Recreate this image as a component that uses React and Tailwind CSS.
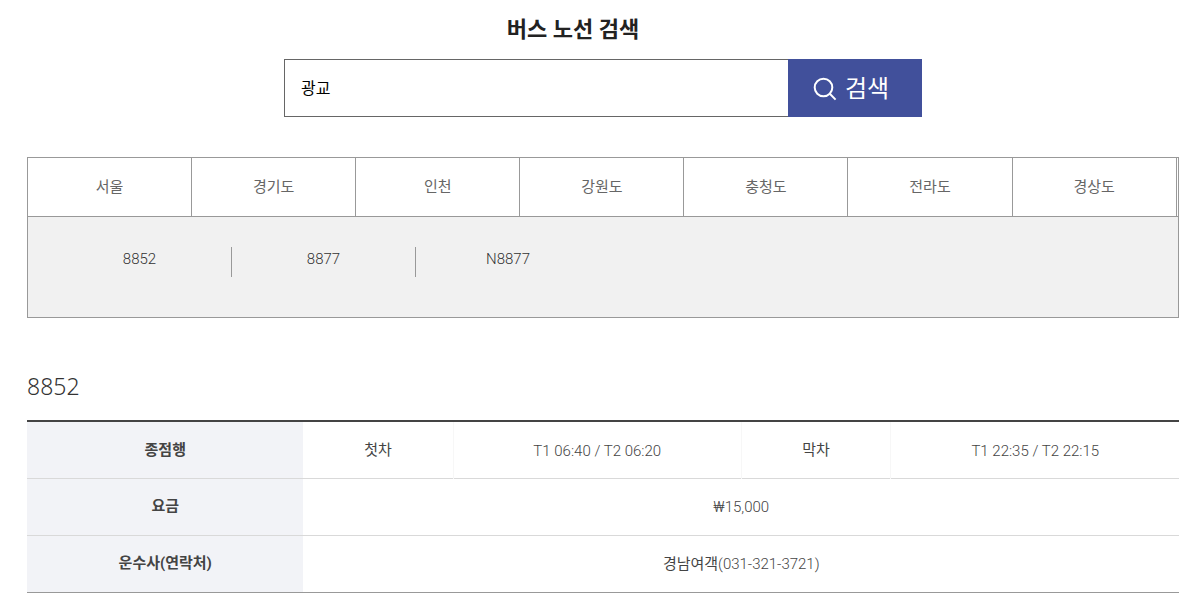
import React, { useState } from "react";

const regions = ["서울", "경기도", "인천", "강원도", "충청도", "전라도", "경상도"];

const routes = ["8852", "8877", "N8877"];

const SearchIcon = () => (
  <svg
    width="24"
    height="24"
    viewBox="0 0 24 24"
    fill="none"
    stroke="currentColor"
    strokeWidth="2"
    aria-hidden="true"
  >
    <circle cx="10.5" cy="10.5" r="8.8" />
    <path d="M16.8 16.8 L22.6 22.6" />
  </svg>
);

const SearchForm = () => {
  const [keyword, setKeyword] = useState("광교");

  return (
    <form
      onSubmit={(e) => e.preventDefault()}
      className="mx-auto mt-3 flex h-[58px] w-full max-w-[638px]"
    >
      <input
        type="text"
        aria-label="버스 노선 검색"
        value={keyword}
        onChange={(e) => setKeyword(e.target.value)}
        className="min-w-0 flex-1 border border-r-0 border-[#666] bg-white px-4 pt-0.5 text-base font-normal text-black outline-none"
      />
      <button
        type="submit"
        className="flex w-[134px] shrink-0 items-center justify-center gap-2 bg-[#41509b] pt-0.5 pr-2 text-2xl font-normal text-white"
      >
        <SearchIcon />
        검색
      </button>
    </form>
  );
};

const RouteList = ({ active, onSelect }) => (
  <section className="mt-10 border border-[#999]">
    <div className="flex border-b border-[#999]">
      {regions.map((name) => (
        <button
          key={name}
          type="button"
          className="h-[58px] w-[14.27%] border-r border-[#999] text-[15px] font-normal text-[#666]"
        >
          {name}
        </button>
      ))}
    </div>
    <ul className="flex bg-[#f1f1f1] pt-[30px] pb-10">
      {routes.map((route) => (
        <li
          key={route}
          className="h-[30px] w-[16%] border-r border-[#999] first:ml-5 last:border-r-0"
        >
          <button
            type="button"
            aria-pressed={active === route}
            onClick={() => onSelect(route)}
            className="block w-full text-center text-[15px] leading-6 text-[#333]"
          >
            {route}
          </button>
        </li>
      ))}
    </ul>
  </section>
);

const RouteTable = ({ route }) => (
  <section className="mt-12">
    <h2 className="font-['Noto_Sans','Noto_Sans_CJK_KR',sans-serif] text-[23px] leading-10 font-light text-[#333]">
      {route}
    </h2>
    <table className="mt-[14px] w-full table-fixed border-collapse border-t-2 border-b border-t-[#444] border-b-[#999] text-center text-[15px] text-[#444]">
      <colgroup>
        <col className="w-[24%]" />
        <col className="w-[13%]" />
        <col className="w-[25%]" />
        <col className="w-[13%]" />
        <col className="w-[25%]" />
      </colgroup>
      <tbody>
        <tr className="h-[57px] border-b border-[#d9d9d9]">
          <th scope="row" className="bg-[#f2f3f7] font-bold">
            종점행
          </th>
          <td className="border-r border-r-[#f7f7f7] font-normal">첫차</td>
          <td className="border-r border-r-[#f7f7f7] pt-0.5">
            T1 06:40 / T2 06:20
          </td>
          <td className="border-r border-r-[#f7f7f7] font-normal">막차</td>
          <td className="pt-0.5">T1 22:35 / T2 22:15</td>
        </tr>
        <tr className="h-[57px] border-b border-[#d9d9d9]">
          <th scope="row" className="bg-[#f2f3f7] font-bold">
            요금
          </th>
          <td colSpan={4} className="pt-0.5">
            ₩15,000
          </td>
        </tr>
        <tr className="h-[57px]">
          <th scope="row" className="bg-[#f2f3f7] font-bold">
            운수사(연락처)
          </th>
          <td colSpan={4} className="pt-0.5">
            <span className="font-normal">경남여객</span>(031-321-3721)
          </td>
        </tr>
      </tbody>
    </table>
  </section>
);

const App = () => {
  const [active, setActive] = useState("8852");

  return (
    <main className="bg-white pt-3 pr-[14px] pb-5 pl-[27px] font-['Roboto','Noto_Sans_CJK_KR',sans-serif] font-light">
      <h1 className="pr-[60px] text-center text-[22px] leading-[35px] font-bold text-[#222]">
        버스 노선 검색
      </h1>
      <SearchForm />
      <RouteList active={active} onSelect={setActive} />
      <RouteTable route={active} />
    </main>
  );
};

export default App;
